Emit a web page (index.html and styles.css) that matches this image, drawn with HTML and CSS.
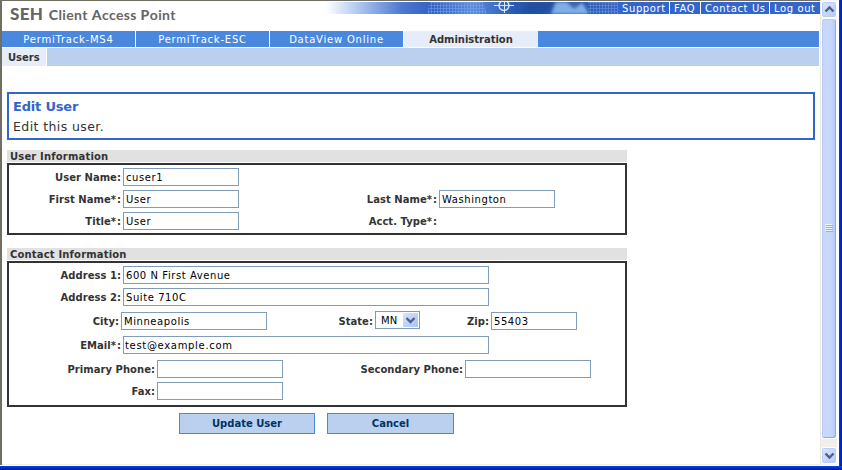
FILE: index.html
```html
<!DOCTYPE html>
<html lang="en">
<head>
<meta charset="utf-8">
<title>SEH Client Access Point</title>
<link rel="stylesheet" href="styles.css">
</head>
<body>
<div class="window">
  <main class="page">
    <header class="header">
      <h1 class="brand"><span class="brand-seh">SEH</span> <span class="brand-name"><b>C</b>lient <b>A</b>ccess <b>P</b>oint</span></h1>
      <svg class="banner" width="292" height="12" viewBox="0 0 292 12">
        <defs>
          <linearGradient id="sky"><stop offset="0" stop-color="#fff"/><stop offset=".12" stop-color="#a9c2ee"/><stop offset=".26" stop-color="#4d78d0"/><stop offset=".37" stop-color="#315fc3"/><stop offset=".5" stop-color="#5b8be0"/><stop offset=".65" stop-color="#2858b0"/><stop offset=".8" stop-color="#2855ac"/><stop offset="1" stop-color="#3564c4"/></linearGradient>
          <pattern id="mesh" width="3" height="3" patternUnits="userSpaceOnUse"><path d="M0 .5H3M.5 0V3" stroke="#88aeec" stroke-width=".8"/></pattern>
          <filter id="soft"><feGaussianBlur stdDeviation="1.5"/></filter>
        </defs>
        <path fill="url(#sky)" d="M0 0h292v12H0z"/>
        <g filter="url(#soft)"><path d="M202 0h28l-12 12h-24z" fill="#244fa2"/><path d="M230 0h26l7 12h-38z" fill="#80aee6"/><path d="M240 0h18l-10 7z" fill="#3c67ae"/></g>
        <path d="M104 0h53l4 12h-60z" fill="url(#mesh)" opacity=".6"/><path d="M262 0h30v12h-30z" fill="url(#mesh)" opacity=".5"/>
        <g fill="none" stroke="#d8e8fb"><circle cx="178" cy="3.500" r="5" stroke-width="1.400"/><path d="M168 3.500h20M178.500 0v11"/></g>
      </svg>
      <nav class="links"><a class="l1">Support</a><a class="l2">FAQ</a><a class="l3">Contact Us</a><a class="l4">Log out</a></nav>
    </header>
    <nav class="tabs"><a>PermiTrack-MS4</a><a>PermiTrack-ESC</a><a>DataView Online</a><a class="active">Administration</a><i></i></nav>
    <nav class="subtabs"><a>Users</a><i></i></nav>
    <section class="intro"><h2>Edit User</h2><p>Edit this user.</p></section>

    <section class="group">
      <h3>User Information</h3>
      <div class="panel user">
        <div class="row"><label class="c1">User Name:</label><div class="field w116">cuser1</div></div>
        <div class="row"><label class="c1">First Name<span class="star">*</span>:</label><div class="field w116">User</div><label class="c-last">Last Name<span class="star">*</span>:</label><div class="field w116">Washington</div></div>
        <div class="row"><label class="c1">Title<span class="star">*</span>:</label><div class="field w116">User</div><label class="c-last">Acct. Type<span class="star">*</span>:</label></div>
      </div>
    </section>

    <section class="group contact-group">
      <h3>Contact Information</h3>
      <div class="panel contact">
        <div class="row"><label class="c1">Address 1:</label><div class="field w366">600 N First Avenue</div></div>
        <div class="row"><label class="c1">Address 2:</label><div class="field w366">Suite 710C</div></div>
        <div class="row spaced"><label class="c-city">City:</label><div class="field w146">Minneapolis</div><label class="c-state">State:</label><div class="select">MN<svg width="15" height="14" viewBox="0 0 15 14"><defs><linearGradient id="btn" x2="1" y2="1"><stop stop-color="#d6e2ff"/><stop offset="1" stop-color="#a9c2f8"/></linearGradient></defs><rect width="15" height="14" rx="1" fill="url(#btn)"/><path d="M3.500 5l4 4 4-4" fill="none" stroke="#4d6185" stroke-width="2.400"/></svg></div><label class="c-zip">Zip:</label><div class="field w86">55403</div></div>
        <div class="row spaced"><label class="c1">EMail<span class="star">*</span>:</label><div class="field w366 mail">test@example.com</div></div>
        <div class="row spaced"><label class="c-phone">Primary Phone:</label><div class="field w126"></div><label class="c-second">Secondary Phone:</label><div class="field w126"></div></div>
        <div class="row"><label class="c-phone">Fax:</label><div class="field w126"></div></div>
      </div>
    </section>
    <div class="actions"><button class="update">Update User</button><button class="cancel">Cancel</button></div>
  </main>
  <aside class="scrollbar">
    <div class="arrow"><svg width="13" height="13" viewBox="0 0 13 13"><path d="M2.500 8.500l4-4 4 4" fill="none" stroke="#4d6185" stroke-width="2.400"/></svg></div>
    <div class="thumb"><svg width="8" height="9" viewBox="0 0 8 9"><path d="M0 .5h7M0 2.500h7M0 4.500h7M0 6.500h7" stroke="#eef4fe"/><path d="M1 1.500h7M1 3.500h7M1 5.500h7M1 7.500h7" stroke="#8cb0f8"/></svg></div>
    <div class="track"></div>
    <div class="arrow"><svg width="13" height="13" viewBox="0 0 13 13"><path d="M2.500 4.500l4 4 4-4" fill="none" stroke="#4d6185" stroke-width="2.400"/></svg></div>
  </aside>
  <div class="edge"></div>
</div>
<div class="bottom"></div>
</body>
</html>
```
FILE: styles.css
```css
* { box-sizing: border-box; }
body { margin: 0; width: 842px; height: 470px; overflow: hidden; background: #fff; font: 10px/12px "DejaVu Sans", sans-serif; color: #333; }
h1, h2, h3, p { margin: 0; }
.window { display: flex; height: 466px; }
.edge { width: 3px; margin-left: auto; background: linear-gradient(90deg, #0046e8, #0012a0); }
.bottom { height: 4px; background: linear-gradient(#0046e8, #0012a0); }
.page { width: 820px; height: 465px; border-left: 2px solid #716f64; border-top: 1px solid #716f64; box-shadow: inset 0 -1px #f1efe2; }
.header { display: flex; height: 30px; padding-top: 1px; }
.brand { width: 324px; padding: 3px 0 0 8px; color: #666; font: 700 15px/18px Lato, sans-serif; white-space: nowrap; }
.brand-seh { font-weight: 900; font-size: 17px; letter-spacing: .3px; margin-right: 2px; }
.brand-name { font-size: 14px; letter-spacing: .38px; }
.brand-name b { font-weight: 900; }
.banner { flex: none; }
.links { display: flex; gap: 1px; width: 202px; height: 12px; color: #fff; font-size: 10px; line-height: 13px; }
.links a { background: #3366cc; padding-left: 4px; letter-spacing: .6px; white-space: nowrap; }
.l1 { width: 51px; } .l2 { width: 30px; } .l3 { width: 68px; } .l4 { width: 50px; }
.tabs { display: flex; gap: 1px; height: 16px; margin-bottom: 1px; padding-right: 1px; }
.tabs a { width: 133px; background: #4a88df; color: #fff; text-align: center; line-height: 17px; letter-spacing: .78px; }
.tabs .active { width: 134px; background: #e6ecf8; color: #333; font-weight: 700; letter-spacing: -.02px; }
.tabs i { flex: 1; background: #4a88df; margin-left: -1px; }
.subtabs { display: flex; gap: 1px; height: 18px; padding-right: 1px; }
.subtabs a { width: 44px; background: #e6ecf8; font-weight: 700; padding-left: 6px; line-height: 19px; }
.subtabs i { flex: 1; background: #bbcfee; }
.intro { width: 808px; height: 48px; margin: 26px 0 10px 5px; border: 2px solid #3366cc; padding: 4px; }
.intro h2 { color: #3366cc; font-size: 13px; line-height: 17px; letter-spacing: -.2px; }
.intro p { font-size: 12.5px; line-height: 16px; margin-top: 4px; letter-spacing: .4px; }
.group { width: 620px; margin-left: 5px; }
.contact-group { margin-top: 13px; }
.group h3 { height: 12px; margin-bottom: 1px; padding-left: 3px; background: #e1e1e1; font-size: 10px; line-height: 13px; letter-spacing: .17px; }
.panel { border: 2px solid #333; display: flex; flex-direction: column; gap: 4px; padding-top: 3px; }
.user { height: 72px; }
.contact { height: 146px; }
.row { display: flex; height: 18px; flex: none; }
.row.spaced { margin-top: 2px; }
label { font-weight: 700; line-height: 19px; text-align: right; padding-right: 2px; white-space: nowrap; letter-spacing: .04px; }
.star { letter-spacing: .9px; }
.c1 { width: 114px; } .c-last { width: 200px; } .c-city { width: 112px; } .c-state { width: 108px; } .c-zip { width: 71px; } .c-phone { width: 148px; } .c-second { width: 182px; }
.field { border: 1px solid #7f9db9; padding-left: 2px; color: #000; line-height: 17px; letter-spacing: .57px; white-space: nowrap; }
.mail { letter-spacing: .68px; padding-left: 1px; }
.w116 { width: 116px; } .w366 { width: 366px; } .w146 { width: 146px; } .w126 { width: 126px; } .w86 { width: 86px; }
.select { display: flex; justify-content: space-between; width: 45px; height: 18px; margin-top: -1px; padding: 1px 1px 1px 5px; border: 1px solid #7f9db9; color: #000; line-height: 16px; }
.actions { display: flex; gap: 12px; margin: 6px 0 0 177px; }
button { height: 21px; padding: 0; border: 1px solid #4a88df; background: #bbcfee; color: #003366; font: 700 10px/19px "DejaVu Sans", sans-serif; }
.update { width: 136px; } .cancel { width: 127px; }
.scrollbar { width: 17px; height: 465px; border-left: 1px solid #ece9e0; padding: 1px 0; background: #f6f5f0; display: flex; flex-direction: column; }
.arrow { height: 17px; border: 1px solid #fff; border-radius: 3px; background: linear-gradient(135deg, #dce6ff, #b4c9fa); display: flex; align-items: center; justify-content: center; box-shadow: inset 0 0 0 1px #b9ccf8; }
.thumb { height: 421px; border: 1px solid #fff; border-radius: 3px; background: linear-gradient(90deg, #c8d7fc 60%, #b3c9fa); display: flex; align-items: center; justify-content: center; box-shadow: inset -1px -1px #8aaae0, inset 1px 1px #b9ccf8; }
.track { flex: 1; background: #f1efe9; }
```
